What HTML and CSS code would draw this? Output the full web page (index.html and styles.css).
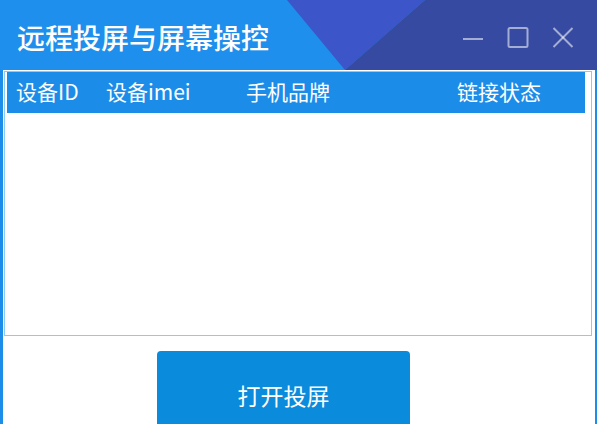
FILE: index.html
```html
<!DOCTYPE html>
<html lang="zh">
<head>
<meta charset="utf-8">
<title>远程投屏与屏幕操控</title>
<link rel="stylesheet" href="styles.css">
</head>
<body>
<div class="window">
  <header class="titlebar">
    <div class="title">远程投屏与屏幕操控</div>
    <div class="controls">
      <svg class="ctl" width="22" height="22" viewBox="0 0 22 22"><line x1="1" y1="13" x2="21" y2="13"/></svg>
      <svg class="ctl" width="22" height="22" viewBox="0 0 22 22"><rect x="1.5" y="2" width="19" height="19" rx="1.5"/></svg>
      <svg class="ctl" width="22" height="22" viewBox="0 0 22 22"><line x1="1.5" y1="2" x2="20.5" y2="21"/><line x1="20.5" y1="2" x2="1.5" y2="21"/></svg>
    </div>
  </header>
  <main class="main">
    <section class="list">
      <div class="list-header">
        <span>设备ID</span>
        <span>设备imei</span>
        <span>手机品牌</span>
        <span>链接状态</span>
      </div>
    </section>
    <button class="btn">打开投屏</button>
  </main>
</div>
</body>
</html>
```

FILE: styles.css
```css
html, body {
  margin: 0;
  padding: 0;
  background: #ffffff;
  overflow: hidden;
}
body {
  font-family: "Noto Sans CJK SC", "Noto Sans", sans-serif;
  width: 600px;
  height: 424px;
}
.window {
  width: 597px;
  height: 424px;
  display: flex;
  flex-direction: column;
  overflow: hidden;
}
.titlebar {
  box-sizing: border-box;
  flex: none;
  height: 70px;
  padding: 4px 23px 0 17px;
  display: flex;
  align-items: center;
  justify-content: space-between;
  background-color: #1e8fec;
  background-image: url("data:image/svg+xml,%3Csvg xmlns='http://www.w3.org/2000/svg' width='597' height='70'%3E%3Crect width='597' height='70' fill='%231e8fec'/%3E%3Cpolygon points='287,0 425,0 345,70' fill='%233c55c8'/%3E%3Cpolygon points='425,0 597,0 597,70 345,70' fill='%23364aa1'/%3E%3C/svg%3E");
  background-repeat: no-repeat;
}
.title {
  color: #ffffff;
  font-size: 28px;
  font-weight: 500;
  line-height: 1;
  white-space: nowrap;
}
.controls {
  display: flex;
  gap: 23px;
}
.ctl {
  display: block;
  fill: none;
  stroke: rgba(255, 255, 255, 0.55);
  stroke-width: 2;
}
.main {
  flex: 1;
  min-height: 0;
  border-left: 3px solid #1c8eea;
  border-right: 2px solid #1c8eea;
  padding-top: 1px;
  display: flex;
  flex-direction: column;
  align-items: flex-start;
  overflow: hidden;
}
.list {
  box-sizing: border-box;
  flex: none;
  margin-left: 1px;
  width: 588px;
  height: 265px;
  border: 1px solid #8ccbf0;
  padding: 0 6px 0 2px;
  background: #ffffff;
}
.list-header {
  box-sizing: border-box;
  height: 41px;
  padding: 0 0 2px 9px;
  display: grid;
  grid-template-columns: 90px 140px 211px 1fr;
  align-items: center;
  background: #1b8de9;
  color: #ffffff;
  font-size: 21px;
  line-height: 39px;
  white-space: nowrap;
}
.btn {
  flex: none;
  margin: 15px 0 0 154px;
  width: 253px;
  height: 88px;
  border: none;
  border-radius: 4px;
  background: #0a8bdc;
  color: #ffffff;
  font-family: inherit;
  font-size: 23px;
  padding: 0;
  display: flex;
  align-items: center;
  justify-content: center;
}
```
